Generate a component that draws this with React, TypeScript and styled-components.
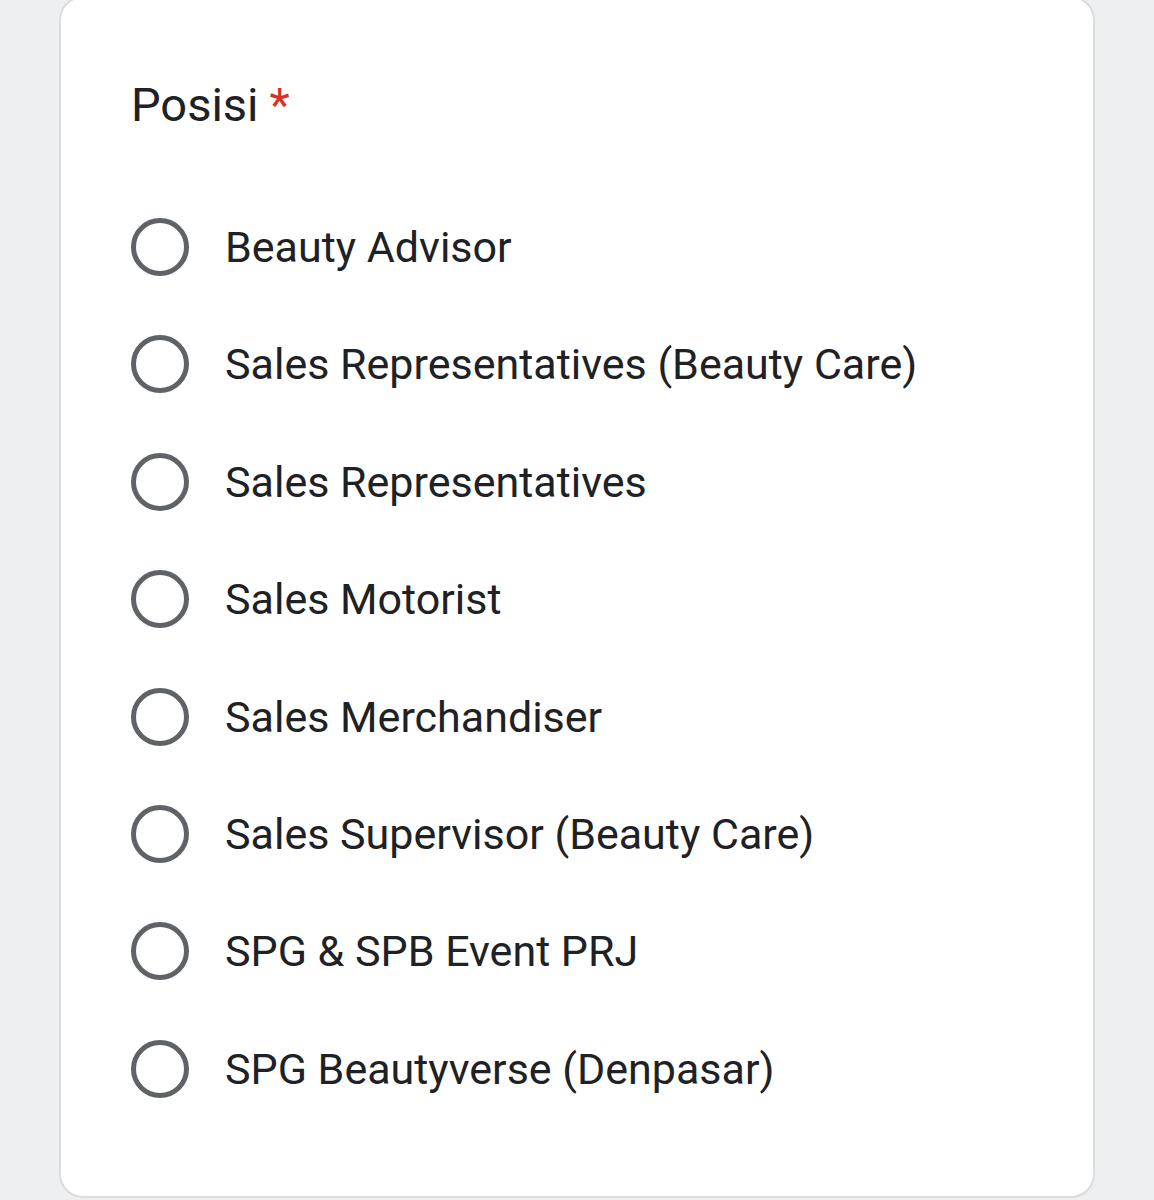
import React from "react";
import styled, { createGlobalStyle } from "styled-components";

const GlobalStyle = createGlobalStyle`
  html, body {
    margin: 0;
    padding: 0;
    background: #eeeff1;
    font-family: Roboto, "Noto Sans", Arial, sans-serif;
    overflow: hidden;
  }
`;

const Page = styled.div`
  display: flex;
  padding-left: 59px;
  height: 1200px;
  box-sizing: border-box;
`;

// card is scrolled slightly, so its top edge sits just above the viewport
const Card = styled.div`
  width: 1036px;
  height: 1202px;
  margin-top: -4px;
  box-sizing: border-box;
  background: #fff;
  border: 2px solid #dadce0;
  border-radius: 24px;
  padding: 80px 0 0 70px;
  display: flex;
  flex-direction: column;
`;

const Title = styled.div`
  font-size: 47px;
  line-height: 54px;
  color: #202124;
  display: flex;
  gap: 11px;
`;

const Required = styled.span`
  color: #d93025;
`;

const OptionList = styled.div`
  display: flex;
  flex-direction: column;
  gap: 59.4px;
  margin-top: 86px;
`;

const Option = styled.label`
  display: flex;
  align-items: center;
  gap: 36px;
  height: 58px;
  cursor: pointer;
`;

const Radio = styled.span`
  width: 58px;
  height: 58px;
  box-sizing: border-box;
  border: 5px solid #5f6368;
  border-radius: 50%;
  flex-shrink: 0;
`;

const OptionText = styled.span`
  font-size: 43px;
  color: #202124;
`;

const options = [
  "Beauty Advisor",
  "Sales Representatives (Beauty Care)",
  "Sales Representatives",
  "Sales Motorist",
  "Sales Merchandiser",
  "Sales Supervisor (Beauty Care)",
  "SPG & SPB Event PRJ",
  "SPG Beautyverse (Denpasar)",
];

export default function App() {
  return (
    <>
      <GlobalStyle />
      <Page>
        <Card>
          <Title>
            Posisi <Required>*</Required>
          </Title>
          <OptionList>
            {options.map((o) => (
              <Option key={o}>
                <Radio />
                <OptionText>{o}</OptionText>
              </Option>
            ))}
          </OptionList>
        </Card>
      </Page>
    </>
  );
}
